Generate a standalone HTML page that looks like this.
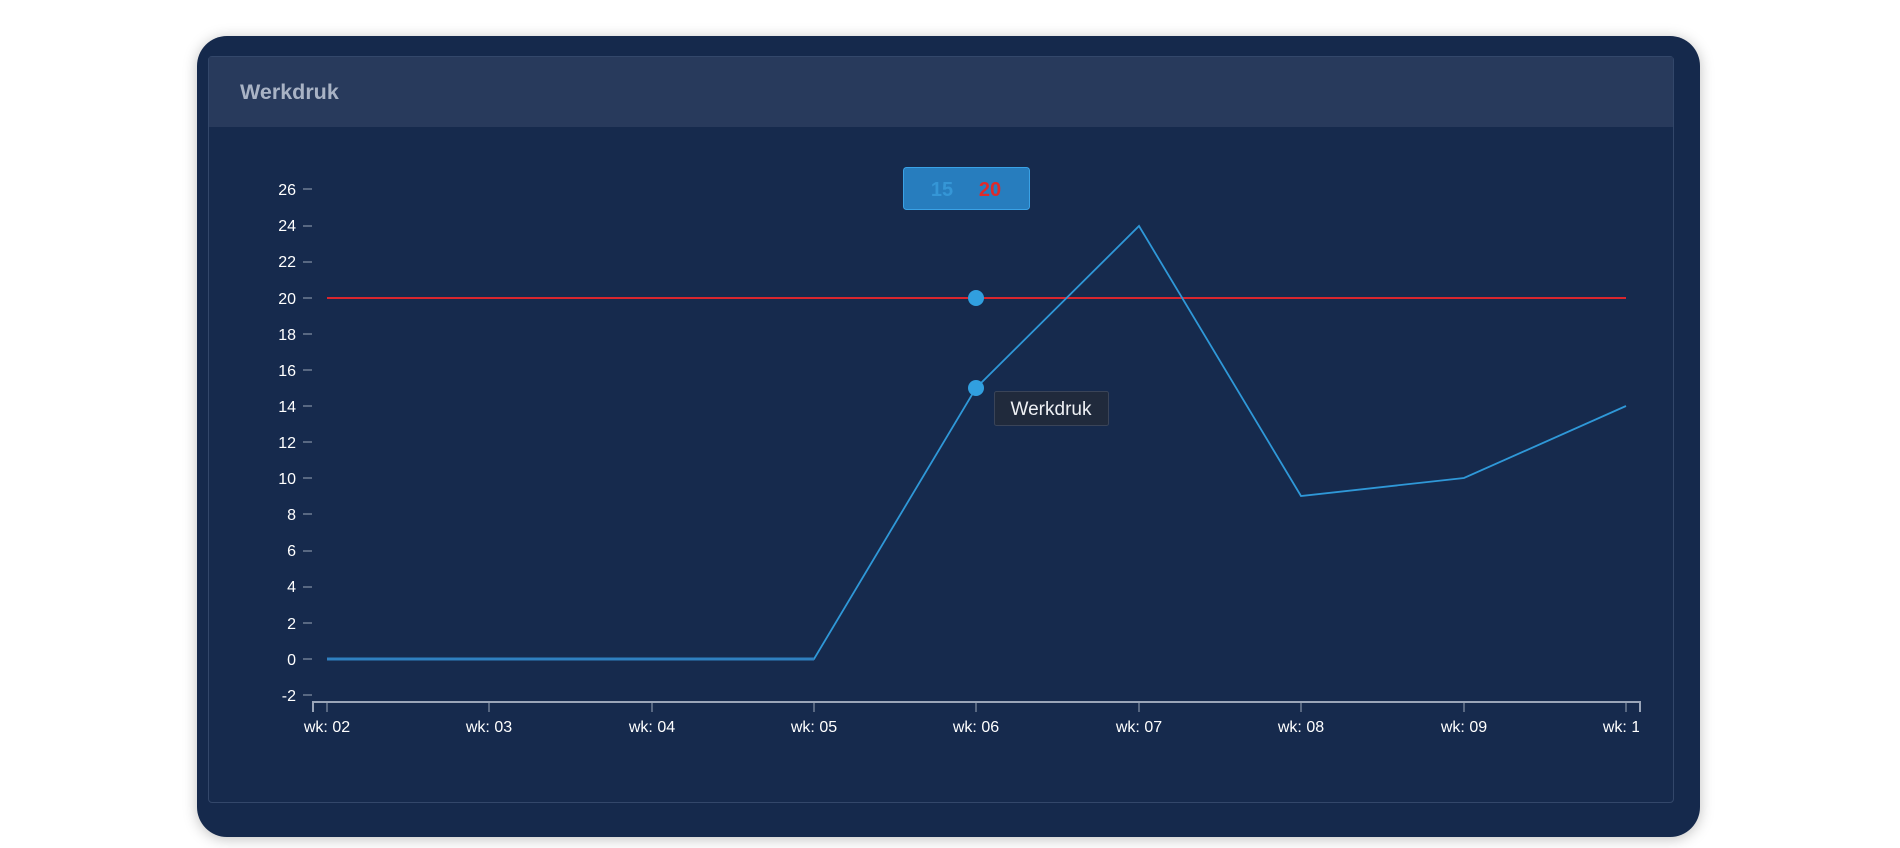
<!DOCTYPE html>
<html><head><style>
html,body{margin:0;padding:0;background:#fff;width:1900px;height:848px;overflow:hidden;font-family:"Liberation Sans",sans-serif}
.card{position:absolute;left:197px;top:36px;width:1503px;height:801px;background:#15294c;border-radius:30px;box-shadow:0 2px 14px rgba(0,0,0,.25)}
.panel{position:absolute;left:208px;top:56px;width:1464px;height:745px;background:#162a4d;border:1px solid #33476a;border-radius:4px}
.hdr{position:absolute;left:0;top:0;right:0;height:70px;background:#283a5c}
.hdr span{position:absolute;left:31px;top:23px;font-size:21.5px;font-weight:bold;color:#a9b3c5}
svg{position:absolute;left:0;top:0}
</style></head><body>
<div class="card"></div>
<div class="panel"><div class="hdr"><span>Werkdruk</span></div></div>
<svg width="1900" height="848" font-family="Liberation Sans, sans-serif">
<g fill="#fff" font-size="16" text-anchor="end">
<text x="296" y="195">26</text><text x="296" y="231">24</text><text x="296" y="267">22</text><text x="296" y="304">20</text><text x="296" y="340">18</text><text x="296" y="376">16</text><text x="296" y="412">14</text><text x="296" y="448">12</text><text x="296" y="484">10</text><text x="296" y="520">8</text><text x="296" y="556">6</text><text x="296" y="592">4</text><text x="296" y="629">2</text><text x="296" y="665">0</text><text x="296" y="701">-2</text>
</g>
<g stroke="#9aa5b8" stroke-width="1">
<path d="M303 189h9M303 226h9M303 262h9M303 298h9M303 334h9M303 370h9M303 406h9M303 442h9M303 478h9M303 514h9M303 551h9M303 587h9M303 623h9M303 659h9M303 695h9"/>
</g>
<g stroke="#9aa5b8" stroke-width="2" fill="none"><path d="M313 712V702H1640V712"/></g>
<g stroke="#9aa5b8" stroke-width="1"><path d="M327 702v10M489 702v10M652 702v10M814 702v10M976 702v10M1139 702v10M1301 702v10M1464 702v10M1626 702v10"/></g>
<g fill="#fff" font-size="16" text-anchor="middle">
<text x="327" y="732">wk: 02</text><text x="489" y="732">wk: 03</text><text x="652" y="732">wk: 04</text><text x="814" y="732">wk: 05</text><text x="976" y="732">wk: 06</text><text x="1139" y="732">wk: 07</text><text x="1301" y="732">wk: 08</text><text x="1464" y="732">wk: 09</text><text x="1626" y="732">wk: 10</text>
</g>
<rect x="1639" y="715" width="20" height="25" fill="#162a4d"/>
<path d="M327 298H1626" stroke="#d9262e" stroke-width="2"/>
<path d="M327 659L814 659L976 388L1139 226L1301 496L1464 478L1626 406" stroke="#2f98d8" stroke-width="1.8" fill="none"/>
<path d="M327 659H814" stroke="#2f80c0" stroke-width="3"/>
<circle cx="976" cy="298" r="8" fill="#319fdf"/>
<circle cx="976" cy="388" r="8" fill="#319fdf"/>
<rect x="903.5" y="167.5" width="126" height="42" rx="3" fill="#277dbe" stroke="#3aa2e6"/>
<text x="942" y="196" font-size="20" font-weight="bold" fill="#3596d6" text-anchor="middle">15</text>
<text x="990" y="196" font-size="20" font-weight="bold" fill="#e02a2a" text-anchor="middle">20</text>
<rect x="994.5" y="391.5" width="114" height="34" rx="2" fill="#202a3c" stroke="#3a4458"/>
<text x="1051" y="415" font-size="19" fill="#eef0f4" text-anchor="middle">Werkdruk</text>
</svg>
</body></html>
